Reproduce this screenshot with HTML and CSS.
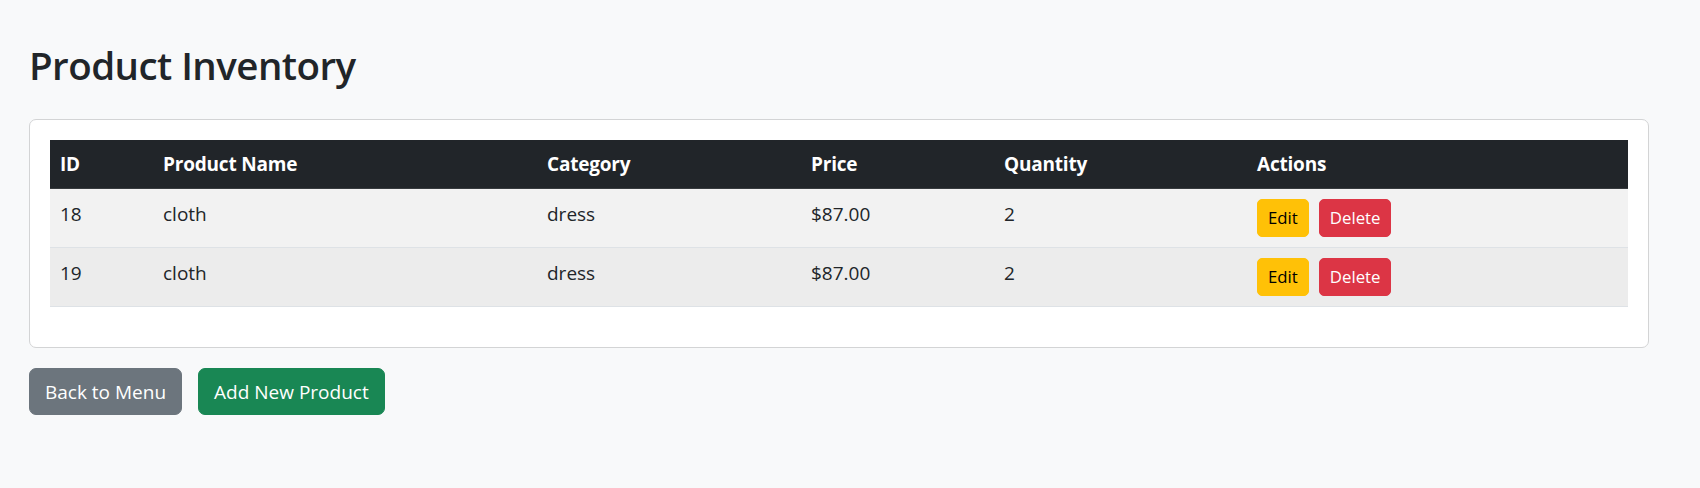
FILE: index.html
```html
<!DOCTYPE html>
<html lang="en">
<head>
<meta charset="utf-8">
<title>Product Inventory</title>
<link rel="stylesheet" href="styles.css">
</head>
<body>
<main class="page">
  <h2 class="title">Product Inventory</h2>
  <section class="card">
    <table class="inv">
      <thead>
        <tr>
          <th class="c-id">ID</th>
          <th class="c-name">Product Name</th>
          <th class="c-cat">Category</th>
          <th class="c-price">Price</th>
          <th class="c-qty">Quantity</th>
          <th class="c-act">Actions</th>
        </tr>
      </thead>
      <tbody>
        <tr class="odd">
          <td>18</td>
          <td>cloth</td>
          <td>dress</td>
          <td>$87.00</td>
          <td>2</td>
          <td><div class="acts"><button class="btn-sm warn">Edit</button><button class="btn-sm danger">Delete</button></div></td>
        </tr>
        <tr class="hover">
          <td>19</td>
          <td>cloth</td>
          <td>dress</td>
          <td>$87.00</td>
          <td>2</td>
          <td><div class="acts"><button class="btn-sm warn">Edit</button><button class="btn-sm danger">Delete</button></div></td>
        </tr>
      </tbody>
    </table>
  </section>
  <div class="footer-actions">
    <button class="btn secondary">Back to Menu</button>
    <button class="btn success">Add New Product</button>
  </div>
</main>
</body>
</html>
```

FILE: styles.css
```css
* { box-sizing: border-box; }
html, body { margin: 0; padding: 0; }
body {
  background: #f8f9fa;
  color: #212529;
  font-family: "Open Sans", "Noto Sans", "Liberation Sans", sans-serif;
  font-size: 19px;
  line-height: 30px;
}
.page {
  padding: 41px 0 0 29px;
  width: 1649px;
}
.title {
  margin: 0 0 30px 0;
  font-size: 38.5px;
  line-height: 48px;
  font-weight: 600;
  letter-spacing: -0.55px;
}
.card {
  background: #fff;
  border: 1px solid #d3d4d5;
  border-radius: 7px;
  padding: 20px;
  width: 1620px;
}
.inv {
  width: 100%;
  border-collapse: collapse;
  margin-bottom: 20px;
  table-layout: fixed;
}
.inv th, .inv td {
  text-align: left;
  vertical-align: top;
  padding: 10px 10px;
}
.inv th {
  background: #212529;
  color: #fff;
  font-weight: 700;
  padding: 9px 10px;
  border-bottom: 1px solid #373b3e;
  letter-spacing: -0.2px;
}
.inv td { border-bottom: 1px solid #dee2e6; }
.c-id { width: 103px; }
.c-name { width: 384px; }
.c-cat { width: 264px; }
.c-price { width: 193px; }
.c-qty { width: 253px; }
.inv tr.odd td { background: #f2f2f2; }
.inv tr.hover td { background: #ececec; }
.acts { display: flex; gap: 10px; }
button { font-family: inherit; cursor: pointer; }
.btn-sm {
  font-size: 16.8px;
  line-height: 26px;
  padding: 5px 10px;
  border: 1px solid transparent;
  border-radius: 5px;
}
.warn { background: #ffc107; border-color: #ffc107; color: #000; }
.danger { background: #dc3545; border-color: #dc3545; color: #fff; }
.footer-actions { display: flex; gap: 16px; margin-top: 20px; }
.btn {
  font-size: 19px;
  line-height: 30px;
  padding: 7.5px 15px;
  border: 1px solid transparent;
  border-radius: 7px;
}
.secondary { background: #6c757d; border-color: #6c757d; color: #fff; }
.success { background: #198754; border-color: #198754; color: #fff; }
```
